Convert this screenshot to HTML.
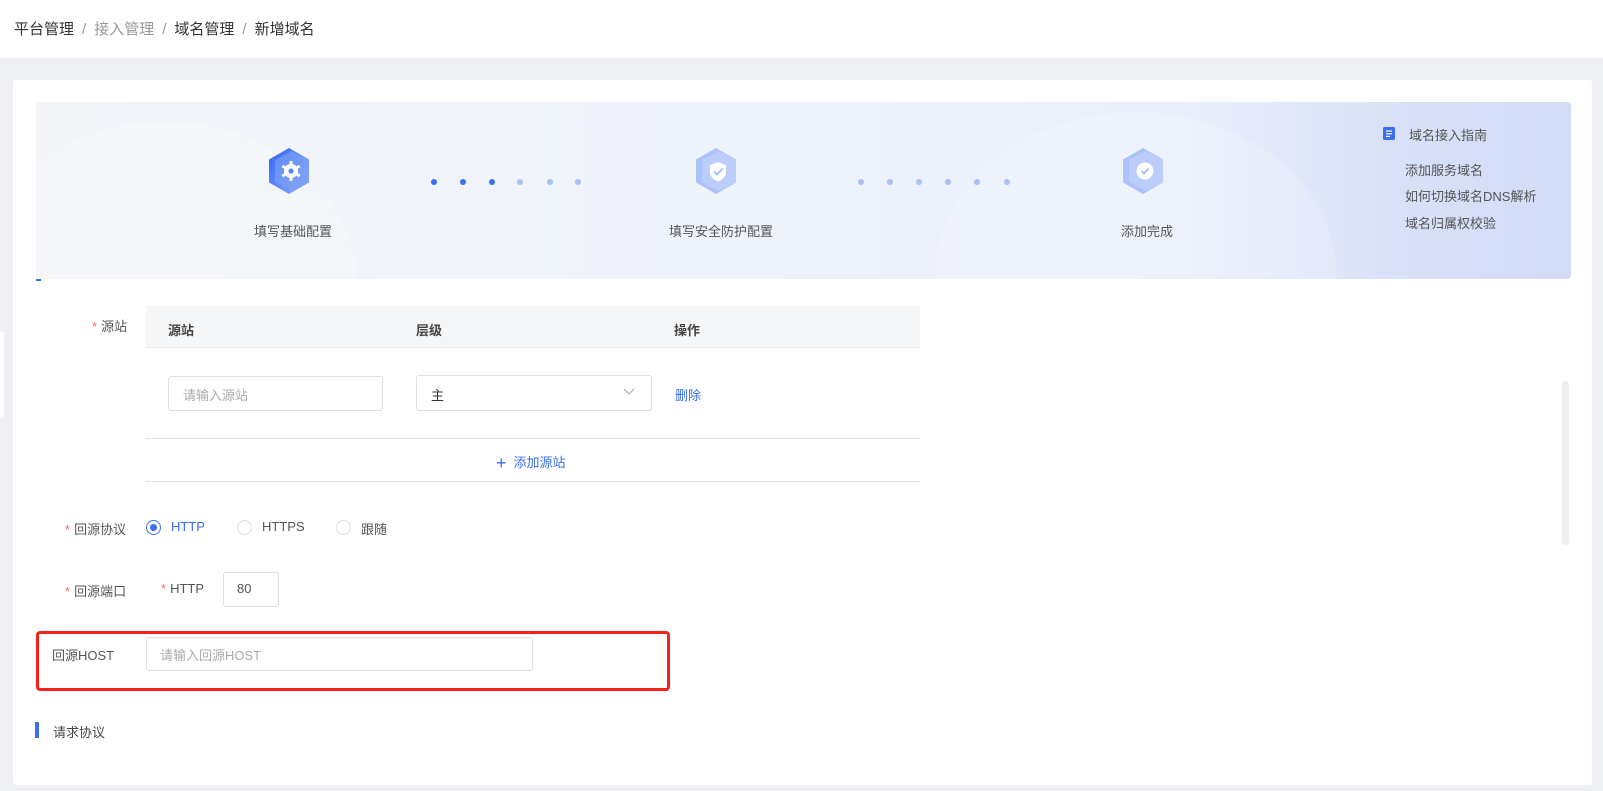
<!DOCTYPE html>
<html><head><meta charset="utf-8"><style>
*{margin:0;padding:0;box-sizing:border-box}
body{width:1603px;height:791px;background:#eef0f4;font-family:"Liberation Sans","Noto Sans CJK SC",sans-serif;position:relative;overflow:hidden;color:#333}
.a{position:absolute}
.hdr{left:0;top:0;width:1603px;height:58px;background:#fff}
.bc{left:14px;top:18px;font-size:15px;color:#333;white-space:nowrap}
.bc .s{color:#999;margin:0 8px}
.card{left:13px;top:80px;width:1579px;height:705px;background:#fff;border-radius:3px}
.ban{left:36px;top:102px;width:1535px;height:177px;border-radius:4px;overflow:hidden;background:linear-gradient(90deg,#f3f5f9 0%,#eef2fa 45%,#e9eefa 75%,#d8e0f8 90%,#d2dbf7 100%)}
.lbl{font-size:13px;color:#555;white-space:nowrap;transform:translateX(-50%)}
.dot{width:6px;height:6px;border-radius:50%;background:#3a6ff0}
.dl{background:#a9bff5}
.g{font-size:13px;color:#555;white-space:nowrap}
.t{font-size:13px;white-space:nowrap}
.star{color:#f56c6c;margin-right:4px}
.inp{border:1px solid #dcdfe6;border-radius:3px;background:#fff}
.ph{color:#aaa;font-size:13px}
.radio{width:15px;height:15px;border-radius:50%;border:1px solid #dcdfe6;background:#fff}
.th{font-size:13px;font-weight:bold;color:#444;white-space:nowrap}
</style></head><body>
<div class="a hdr"></div>
<div class="a bc">平台管理<span class="s">/</span><span style="color:#999">接入管理</span><span class="s">/</span>域名管理<span class="s">/</span>新增域名</div>
<div class="a" style="left:0;top:332px;width:4px;height:85px;background:#fff;border-radius:0 3px 3px 0"></div>
<div class="a card"></div>
<div class="a ban">
 <div class="a" style="left:-60px;top:20px;width:380px;height:320px;border-radius:50%;background:rgba(255,255,255,.25)"></div>
 <div class="a" style="left:900px;top:10px;width:400px;height:320px;border-radius:50%;background:rgba(255,255,255,.18)"></div>
</div>
<!-- step icons -->
<svg class="a" style="left:267px;top:147px" width="44" height="48" viewBox="0 0 44 48"><defs><linearGradient id="g1" x1="0" y1="0" x2="1" y2="1"><stop offset="0" stop-color="#2f66f0"/><stop offset="1" stop-color="#8fb0fb"/></linearGradient></defs><polygon points="22,1 42,12.5 42,35.5 22,47 2,35.5 2,12.5" fill="url(#g1)"/><polygon points="25,4 42,13 42,35 25,44 8,35 8,13" fill="#7fa2f8" opacity=".6"/><circle cx="24" cy="24" r="7" fill="#fff"/><g stroke="#fff" stroke-width="3"><line x1="24" y1="14" x2="24" y2="34"/><line x1="15.3" y1="19" x2="32.7" y2="29"/><line x1="15.3" y1="29" x2="32.7" y2="19"/></g><circle cx="24" cy="24" r="2.6" fill="#5a86f5"/></svg>
<svg class="a" style="left:694px;top:147px" width="44" height="48" viewBox="0 0 44 48"><polygon points="22,1 42,12.5 42,35.5 22,47 2,35.5 2,12.5" fill="#abc2fa"/><polygon points="25,4 42,13 42,35 25,44 8,35 8,13" fill="#bccdfb"/><path d="M24 15 L32 18 V25 C32 30 28 33 24 34.5 C20 33 16 30 16 25 V18 Z" fill="#fff"/><path d="M20 24.5 L23 27.5 L28.5 21.5" stroke="#a9c0fa" stroke-width="2" fill="none"/></svg>
<svg class="a" style="left:1121px;top:147px" width="44" height="48" viewBox="0 0 44 48"><polygon points="22,1 42,12.5 42,35.5 22,47 2,35.5 2,12.5" fill="#abc2fa"/><polygon points="25,4 42,13 42,35 25,44 8,35 8,13" fill="#bccdfb"/><circle cx="24" cy="24" r="8.5" fill="#fff"/><path d="M20.5 24 L23 26.5 L27.5 21.5" stroke="#a9c0fa" stroke-width="2" fill="none"/></svg>
<div class="a lbl" style="left:293px;top:221px">填写基础配置</div>
<div class="a lbl" style="left:721px;top:221px">填写安全防护配置</div>
<div class="a lbl" style="left:1147px;top:221px">添加完成</div>
<div class="a dot" style="left:431px;top:179px"></div><div class="a dot" style="left:460px;top:179px"></div><div class="a dot" style="left:489px;top:179px"></div>
<div class="a dot dl" style="left:517px;top:179px"></div><div class="a dot dl" style="left:547px;top:179px"></div><div class="a dot dl" style="left:575px;top:179px"></div>
<div class="a dot dl" style="left:858px;top:179px"></div><div class="a dot dl" style="left:887px;top:179px"></div><div class="a dot dl" style="left:916px;top:179px"></div><div class="a dot dl" style="left:945px;top:179px"></div><div class="a dot dl" style="left:974px;top:179px"></div><div class="a dot dl" style="left:1004px;top:179px"></div>
<!-- guide -->
<svg class="a" style="left:1383px;top:127px" width="12" height="13" viewBox="0 0 12 13"><rect width="12" height="13" rx="1.5" fill="#3a6ff0"/><g stroke="#fff" stroke-width="1.2"><line x1="3" y1="4" x2="9" y2="4"/><line x1="3" y1="6.7" x2="9" y2="6.7"/><line x1="3" y1="9.4" x2="7" y2="9.4"/></g></svg>
<div class="a g" style="left:1409px;top:125px">域名接入指南</div>
<div class="a g" style="left:1405px;top:160px">添加服务域名</div>
<div class="a g" style="left:1405px;top:186px">如何切换域名DNS解析</div>
<div class="a g" style="left:1405px;top:213px">域名归属权校验</div>
<div class="a" style="left:36px;top:279px;width:5px;height:2px;background:#3a6ff0"></div>
<!-- 源站 -->
<div class="a t" style="left:92px;top:316px;color:#555"><span class="star">*</span>源站</div>
<div class="a" style="left:146px;top:306px;width:774px;height:42px;background:#f5f6f8;border-bottom:1px solid #e8eaee"></div>
<div class="a th" style="left:168px;top:320px">源站</div>
<div class="a th" style="left:416px;top:320px">层级</div>
<div class="a th" style="left:674px;top:320px">操作</div>
<div class="a inp" style="left:168px;top:376px;width:215px;height:35px"></div>
<div class="a ph" style="left:183px;top:385px">请输入源站</div>
<div class="a inp" style="left:416px;top:375px;width:236px;height:36px"></div>
<div class="a t" style="left:431px;top:385px;color:#333">主</div>
<svg class="a" style="left:623px;top:388px" width="12" height="8" viewBox="0 0 12 8"><path d="M1 1 L6 6 L11 1" stroke="#aaa" fill="none" stroke-width="1"/></svg>
<div class="a t" style="left:675px;top:385px;color:#3a6ff0">删除</div>
<div class="a" style="left:146px;top:438px;width:774px;height:1px;background:#e3e6eb"></div>
<div class="a t" style="left:496px;top:452px;color:#3a6ff0"><span style="font-size:18px;font-weight:300;vertical-align:-2px;margin-right:7px">+</span>添加源站</div>
<div class="a" style="left:146px;top:481px;width:774px;height:1px;background:#e3e6eb"></div>
<!-- 回源协议 -->
<div class="a t" style="left:65px;top:519px;color:#555"><span class="star">*</span>回源协议</div>
<div class="a radio" style="left:146px;top:520px;border-color:#3a6ff0"></div>
<div class="a" style="left:150px;top:524px;width:7px;height:7px;border-radius:50%;background:#3a6ff0"></div>
<div class="a t" style="left:171px;top:519px;color:#3a6ff0">HTTP</div>
<div class="a radio" style="left:237px;top:520px"></div>
<div class="a t" style="left:262px;top:519px;color:#555">HTTPS</div>
<div class="a radio" style="left:336px;top:520px"></div>
<div class="a t" style="left:361px;top:519px;color:#555">跟随</div>
<!-- 回源端口 -->
<div class="a t" style="left:65px;top:581px;color:#555"><span class="star">*</span>回源端口</div>
<div class="a t" style="left:161px;top:581px;color:#555"><span class="star">*</span>HTTP</div>
<div class="a inp" style="left:223px;top:572px;width:56px;height:35px"></div>
<div class="a t" style="left:237px;top:581px;color:#555">80</div>
<!-- host -->
<div class="a" style="left:36px;top:631px;width:634px;height:60px;border:3px solid #f5221b;border-radius:4px"></div>
<div class="a t" style="left:52px;top:645px;color:#555">回源HOST</div>
<div class="a inp" style="left:146px;top:637px;width:387px;height:34px"></div>
<div class="a ph" style="left:160px;top:645px">请输入回源HOST</div>
<!-- 请求协议 -->
<div class="a" style="left:35px;top:722px;width:4px;height:16px;background:#3a6ff0"></div>
<div class="a t" style="left:53px;top:722px;color:#444">请求协议</div>
<div class="a" style="left:1562px;top:381px;width:7px;height:164px;background:#eceef2;border-radius:4px"></div>
</body></html>
